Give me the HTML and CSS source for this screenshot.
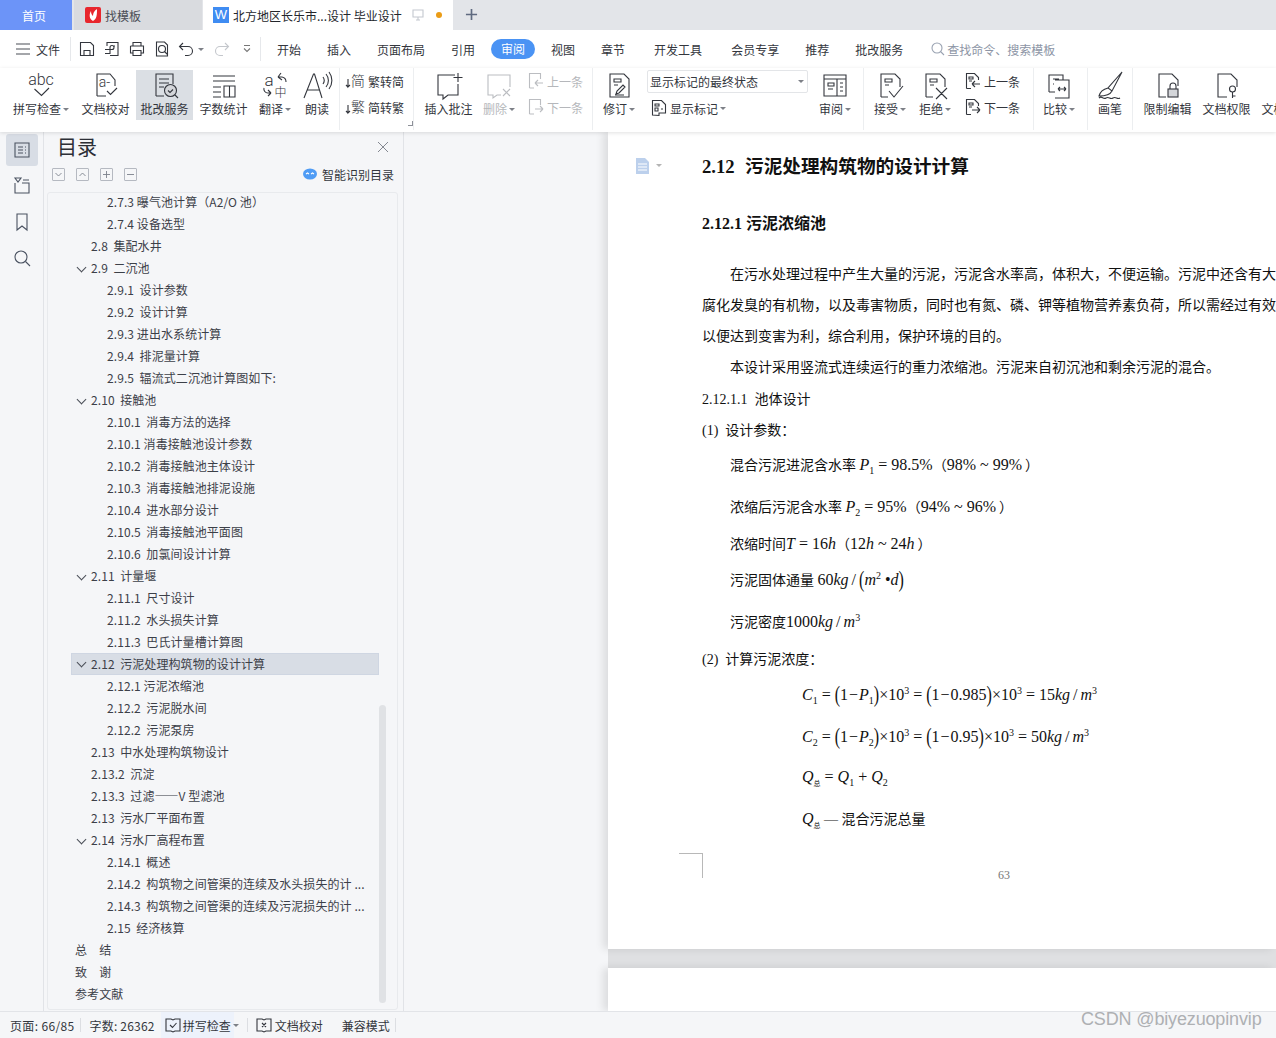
FILE: index.html
```html
<!DOCTYPE html>
<html lang="zh">
<head>
<meta charset="utf-8">
<title>WPS</title>
<link rel="stylesheet" href="styles.css">
</head>
<body>
<div class="app">
  <div class="tabs">
    <div class="tab tab-home">首页</div>
    <div class="tab tab-tpl">
      <svg class="tab-ico" viewBox="0 0 16 16"><rect width="16" height="16" rx="2" fill="#e8262d"/><path d="M8 14C4 12 4 7 6 4c0 3 1 4 2 5 0-3 1-5 4-7 0 5 0 10-4 12z" fill="#fff"/></svg>
      找模板
    </div>
    <div class="tab tab-doc">
      <span class="w-ico">W</span>
      <span class="tab-title">北方地区长乐市...设计 毕业设计</span>
      <svg class="tab-mon" viewBox="0 0 14 14"><path d="M2 2h10v7H2zM7 9v3M5 12h4"/></svg>
      <span class="dot"></span>
    </div>
    <svg class="plus" viewBox="0 0 14 14"><path d="M7 1v12M1 7h12"/></svg>
  </div>

  <div class="menu">
    <svg class="ham" viewBox="0 0 14 12"><path d="M0 1h14M0 6h14M0 11h14"/></svg>
    <span class="file">文件</span>
    <span class="msep"></span>
    <div class="quick">
      <svg class="q" viewBox="0 0 16 16"><path d="M1.500 1.500h10l3 3v10h-13zM5 14.500v-5h6v5"/></svg>
      <svg class="q" viewBox="0 0 16 16"><path d="M3 5V1.500h11V14.500H6M1 8.500h7a2 2 0 1 0-2-2v6H1M9 5h2"/></svg>
      <svg class="q" viewBox="0 0 16 16"><path d="M4 5V1.500h8V5M1.500 5h13v7H12M4 12H1.500V5M4 9.500h8v5H4z"/></svg>
      <svg class="q" viewBox="0 0 16 16"><path d="M2.500 15V1h8l3 3v11zM10.500 10.500l3 3"/><circle cx="8" cy="8" r="3.500"/></svg>
      <svg class="q q-undo" viewBox="0 0 16 16"><path d="M5 2L1.500 5.500 5 9M1.500 5.500H10a4.500 4.500 0 0 1 0 9H7"/></svg>
      <span class="caret caret-q"></span>
      <svg class="q q-redo" viewBox="0 0 16 16"><path d="M11 2l3.500 3.500L11 9M14.500 5.500H6a4.500 4.500 0 0 0 0 9h3"/></svg>
      <svg class="q q-more" viewBox="0 0 10 10"><path d="M2 1.500h6M2 4.500l3 3 3-3"/></svg>
    </div>
    <span class="msep msep-2"></span>
    <nav class="nav">
      <span>开始</span><span>插入</span><span>页面布局</span><span>引用</span>
      <span class="pill">审阅</span>
      <span>视图</span><span>章节</span><span class="pad3">开发工具</span><span class="pad3">会员专享</span><span>推荐</span><span>批改服务</span>
    </nav>
    <div class="search">
      <svg class="s-ico" viewBox="0 0 14 14"><circle cx="6" cy="6" r="5"/><path d="M9.500 9.500l3.500 3.500"/></svg>
      查找命令、搜索模板
    </div>
  </div>

  <div class="ribbon">
    <div class="rb w66">
      <svg class="ri" viewBox="0 0 32 32"><text x="16" y="15" class="it" font-size="16">abc</text><path d="M9.500 19l7 6.500 7.500-7.500"/></svg>
      <span class="lb">拼写检查<i class="caret"></i></span>
    </div>
    <div class="rb w57 ml3">
      <svg class="ri" viewBox="0 0 32 32"><path d="M7 26V4h13l5 6v6M7 26h9"/><text x="14.500" y="17" class="it" font-size="14">a-</text><path d="M17 21l3.500 3.500L27 18"/></svg>
      <span class="lb">文档校对</span>
    </div>
    <div class="rb w57 ml2 on">
      <svg class="ri" viewBox="0 0 32 32"><path d="M7 26V4h17v10M7 26h8M10 9h10M10 13h10M10 17h5"/><circle cx="21.500" cy="20.500" r="6" class="fillg"/><path d="M26 25l3 3M19 20.500l2 2 3-3"/></svg>
      <span class="lb">批改服务</span>
    </div>
    <div class="rb w57 ml2">
      <svg class="ri" viewBox="0 0 32 32"><path d="M5 6h22M5 11h22M5 17h8M5 22h8M5 27h8M16 16h11v11H16zM21.500 16v11"/></svg>
      <span class="lb">字数统计</span>
    </div>
    <div class="rb w38 ml4">
      <svg class="ri" viewBox="0 0 32 32"><text x="10" y="16" class="it" font-size="17">a</text><path d="M19 7l3-4M19 7l4 3M19 7h4a5 5 0 0 1 4 5M5 18a4 4 0 0 0 4 5h3M12 23l-3-3M12 23l-3 3"/><text x="21.500" y="27" class="it it-cjk" font-size="12">中</text></svg>
      <span class="lb">翻译<i class="caret"></i></span>
    </div>
    <div class="rb w38 ml4">
      <svg class="ri" viewBox="0 0 32 32"><path d="M3 28L12.500 4h1L21 28M6.500 20H18M22 7a6 6 0 0 1 0 7M25 4a10 10 0 0 1 0 13M28 2a14 14 0 0 1 0 17"/></svg>
      <span class="lb">朗读</span>
    </div>
    <span class="sep ml3"></span>
    <div class="stack w64 ml4">
      <div class="sr"><svg class="si si-wide" viewBox="0 0 22 22"><path d="M4 9v8l2-2M4 17l-2-2"/><text x="14" y="16" class="it it-cjk" font-size="14">简</text></svg>繁转简</div>
      <div class="sr"><svg class="si si-wide" viewBox="0 0 22 22"><path d="M4 9v8l2-2M4 17l-2-2"/><text x="14" y="16" class="it it-cjk" font-size="14">繁</text></svg>简转繁</div>
      <i class="corner"></i>
    </div>
    <span class="sep ml5"></span>
    <div class="rb w57 ml6">
      <svg class="ri" viewBox="0 0 32 32"><path d="M22 5H5v20h5v4l5-4h10V14M25 3v9M20.500 7.500h9"/></svg>
      <span class="lb">插入批注</span>
    </div>
    <div class="rb w40 ml2 off">
      <svg class="ri" viewBox="0 0 32 32"><path d="M27 17V5H5v20h5v3l4-3h4M20 19l7 7M27 19l-7 7"/></svg>
      <span class="lb">删除<i class="caret"></i></span>
    </div>
    <div class="stack w56 ml8 off">
      <div class="sr"><svg class="si" viewBox="0 0 18 18"><path d="M2.500 16V1.500h11V7M2.500 16H7M16 11H8M8 11l3-3M8 11l3 3"/></svg>上一条</div>
      <div class="sr"><svg class="si" viewBox="0 0 18 18"><path d="M2.500 16V1.500h11V7M2.500 16H7M8 11h8M16 11l-3-3M16 11l-3 3"/></svg>下一条</div>
    </div>
    <span class="sep ml9"></span>
    <div class="rb w44 ml4">
      <svg class="ri" viewBox="0 0 32 32"><path d="M7 27V4h14l5 5v18zM11 9h7v3h-7zM11 15h4M13 24l1-3 6-6 2 2-6 6zM12 25h9"/></svg>
      <span class="lb">修订<i class="caret"></i></span>
    </div>
    <div class="combo-col ml6">
      <div class="combo">显示标记的最终状态<i class="caret"></i></div>
      <div class="mark"><svg class="si" viewBox="0 0 18 18"><path d="M2.500 16V1.500h9l4 4V14H9v2.500zM5 5h4v2H5zM5 9h3v3H5zM11 10h2"/></svg>显示标记<i class="caret"></i></div>
    </div>
    <div class="rb w44 ml5">
      <svg class="ri" viewBox="0 0 32 32"><path d="M5 5h22v21H5zM5 9h22M18 9v17M9 13h6v3H9zM9 19h5M21 13h3M21 17h3M21 21h3"/></svg>
      <span class="lb">审阅<i class="caret"></i></span>
    </div>
    <span class="sep ml6"></span>
    <div class="rb w44 ml4">
      <svg class="ri" viewBox="0 0 32 32"><path d="M7 27V4h14l5 5v8M7 27h7M11 9h7v3h-7zM11 15h4M15 21l5 6 9-11"/></svg>
      <span class="lb">接受<i class="caret"></i></span>
    </div>
    <div class="rb w44 ml1">
      <svg class="ri" viewBox="0 0 32 32"><path d="M7 27V4h14l5 5v8M7 27h7M11 9h7v3h-7zM11 15h4M17 18l11 11M28 18L17 29"/></svg>
      <span class="lb">拒绝<i class="caret"></i></span>
    </div>
    <div class="stack w56 ml7">
      <div class="sr"><svg class="si" viewBox="0 0 18 18"><path d="M2.500 16.500V1.500h8l4 4V8M2.500 16.500H7M5 5h4v2H5zM5 9h3M16 12H8M8 12l3-3M8 12l3 3"/></svg>上一条</div>
      <div class="sr"><svg class="si" viewBox="0 0 18 18"><path d="M2.500 16.500V1.500h8l4 4V8M2.500 16.500H7M5 5h4v2H5zM5 9h3M8 12h8M16 12l-3-3M16 12l-3 3"/></svg>下一条</div>
    </div>
    <span class="sep ml13"></span>
    <div class="rb w46 ml2">
      <svg class="ri" viewBox="0 0 32 32"><path d="M6 22V5h14v5M12 10h14v18H12M6 22h6M10 9h6M10 14h1M15 19h8M15 19l2-2M15 19l2 2M23 19l-2-2M23 19l-2 2"/></svg>
      <span class="lb">比较<i class="caret"></i></span>
    </div>
    <span class="sep ml5"></span>
    <div class="rb w40 ml2">
      <svg class="ri" viewBox="0 0 32 32"><path d="M28 2L14 18l4 3zM14 18c-4 1-8 4-9 8 5 0 11-1 13-5M5 28c3-3 4 2 7 0s4 2 7 0 4 2 7 0"/></svg>
      <span class="lb">画笔</span>
    </div>
    <span class="sep ml2"></span>
    <div class="rb w57 ml6">
      <svg class="ri" viewBox="0 0 32 32"><path d="M14 27H7V4h13l6 6v6"/><rect x="16" y="19" width="10" height="8" class="fillg"/><path d="M18 19v-3a3 3 0 0 1 6 0v3"/></svg>
      <span class="lb">限制编辑</span>
    </div>
    <div class="rb w57 ml2">
      <svg class="ri" viewBox="0 0 32 32"><path d="M16 27H7V4h13l6 6v7"/><circle cx="21.500" cy="19" r="3"/><path d="M21.500 22v6M21.500 26h3"/></svg>
      <span class="lb">文档权限</span>
    </div>
    <div class="rb w57 ml2">
      <svg class="ri" viewBox="0 0 32 32"><path d="M16 27H7V4h13l6 6"/></svg>
      <span class="lb">文档定稿</span>
    </div>
  </div>

  <div class="main">
    <aside class="rail">
      <div class="rail-btn active"><svg viewBox="0 0 20 20"><path d="M3 3h14v14H3zM6 7h5M13 7h1M6 10h5M13 10h1M6 13h5M13 13h1"/></svg></div>
      <div class="rail-btn"><svg viewBox="0 0 20 20"><path d="M3 2h6L6 6zM11 4h6M3 7v10h14V7h-7"/></svg></div>
      <div class="rail-btn"><svg viewBox="0 0 20 20"><path d="M5 2h10v16l-5-4-5 4z"/></svg></div>
      <div class="rail-btn"><svg viewBox="0 0 20 20"><circle cx="9" cy="9" r="6"/><path d="M13.500 13.500L18 18"/></svg></div>
    </aside>
    <section class="panel">
      <div class="p-head">
        <h1 class="p-title">目录</h1>
        <svg class="p-close" viewBox="0 0 10 10"><path d="M0 0l10 10M10 0L0 10"/></svg>
      </div>
      <div class="p-tools">
        <span class="tb"><svg viewBox="0 0 11 11"><path d="M2.500 4l3 3 3-3"/></svg></span>
        <span class="tb"><svg viewBox="0 0 11 11"><path d="M2.500 7l3-3 3 3"/></svg></span>
        <span class="tb"><svg viewBox="0 0 11 11"><path d="M2 5.500h7M5.500 2v7"/></svg></span>
        <span class="tb"><svg viewBox="0 0 11 11"><path d="M2 5.500h7"/></svg></span>
        <span class="smart"><svg class="smart-ico" viewBox="0 0 14 12"><ellipse cx="7" cy="6" rx="7" ry="5.500" fill="#4f9cf5"/><path d="M3 6l1.500-1L6 6M8 6l1.500-1L11 6" fill="none" stroke="#fff"/></svg>智能识别目录</span>
      </div>
      <div class="tree-box">
        <ul class="tree">
          <li class="l2">2.7.3 曝气池计算（A2/O 池）</li>
          <li class="l2">2.7.4 设备选型</li>
          <li class="l1">2.8  集配水井</li>
          <li class="l1 open">2.9  二沉池</li>
          <li class="l2">2.9.1  设计参数</li>
          <li class="l2">2.9.2  设计计算</li>
          <li class="l2">2.9.3 进出水系统计算</li>
          <li class="l2">2.9.4  排泥量计算</li>
          <li class="l2">2.9.5  辐流式二沉池计算图如下:</li>
          <li class="l1 open">2.10  接触池</li>
          <li class="l2">2.10.1  消毒方法的选择</li>
          <li class="l2">2.10.1 消毒接触池设计参数</li>
          <li class="l2">2.10.2  消毒接触池主体设计</li>
          <li class="l2">2.10.3  消毒接触池排泥设施</li>
          <li class="l2">2.10.4  进水部分设计</li>
          <li class="l2">2.10.5  消毒接触池平面图</li>
          <li class="l2">2.10.6  加氯间设计计算</li>
          <li class="l1 open">2.11  计量堰</li>
          <li class="l2">2.11.1  尺寸设计</li>
          <li class="l2">2.11.2  水头损失计算</li>
          <li class="l2">2.11.3  巴氏计量槽计算图</li>
          <li class="l1 open sel">2.12  污泥处理构筑物的设计计算</li>
          <li class="l2">2.12.1 污泥浓缩池</li>
          <li class="l2">2.12.2  污泥脱水间</li>
          <li class="l2">2.12.2  污泥泵房</li>
          <li class="l1">2.13  中水处理构筑物设计</li>
          <li class="l1">2.13.2  沉淀</li>
          <li class="l1">2.13.3  过滤——V 型滤池</li>
          <li class="l1">2.13  污水厂平面布置</li>
          <li class="l1 open">2.14  污水厂高程布置</li>
          <li class="l2">2.14.1  概述</li>
          <li class="l2">2.14.2  构筑物之间管渠的连续及水头损失的计 ...</li>
          <li class="l2">2.14.3  构筑物之间管渠的连续及污泥损失的计 ...</li>
          <li class="l2">2.15  经济核算</li>
          <li class="l0">总　结</li>
          <li class="l0">致　谢</li>
          <li class="l0">参考文献</li>
        </ul>
        <span class="scroll"></span>
      </div>
    </section>
    <section class="doc">
      <article class="page">
        <svg class="page-ico" viewBox="0 0 26 16"><path d="M0 0h9l4 4v12H0z" fill="#bcd0ec"/><path d="M2 6h9M2 9h9M2 12h9" stroke="#fff"/><path d="M20 6h6l-3 3z" fill="#b4b4b4"/></svg>
        <h2 class="line h-a">2.12&nbsp; 污泥处理构筑物的设计计算</h2>
        <h3 class="line h-b g26">2.12.1 污泥浓缩池</h3>
        <p class="line ind g20">在污水处理过程中产生大量的污泥，污泥含水率高，体积大，不便运输。污泥中还含有大</p>
        <p class="line">腐化发臭的有机物，以及毒害物质，同时也有氮、磷、钾等植物营养素负荷，所以需经过有效</p>
        <p class="line">以便达到变害为利，综合利用，保护环境的目的。</p>
        <p class="line ind">本设计采用竖流式连续运行的重力浓缩池。污泥来自初沉池和剩余污泥的混合。</p>
        <p class="line g1">2.12.1.1&nbsp; 池体设计</p>
        <p class="line">(1)&nbsp; 设计参数：</p>
        <p class="line ind g3">混合污泥进泥含水率 <span class="f"><i>P</i><sub>1</sub> = 98.5%</span>（<span class="f">98% ~ 99%</span><span class="pc">）</span></p>
        <p class="line ind g11">浓缩后污泥含水率 <span class="f"><i>P</i><sub>2</sub> = 95%</span>（<span class="f">94% ~ 96%</span><span class="pc">）</span></p>
        <p class="line ind g6">浓缩时间<span class="f"><i>T</i> = 16<i>h</i></span>（<span class="f">12<i>h</i> ~ 24<i>h</i></span><span class="pc">）</span></p>
        <p class="line ind g5">污泥固体通量 <span class="f">60<i>kg</i><span class="sl">/</span><span class="bp">(</span><i>m</i><sup>2</sup> •<i>d</i><span class="bp">)</span></span></p>
        <p class="line ind g11">污泥密度<span class="f">1000<i>kg</i><span class="sl">/</span><i>m</i><sup>3</sup></span></p>
        <p class="line g7">(2)&nbsp; 计算污泥浓度：</p>
        <p class="line eq g4"><span class="f"><i>C</i><sub>1</sub> = <span class="bp">(</span>1<span class="mn">−</span><i>P</i><sub>1</sub><span class="bp">)</span>×10<sup>3</sup> = <span class="bp">(</span>1<span class="mn">−</span>0.985<span class="bp">)</span>×10<sup>3</sup> = 15<i>kg</i><span class="sl">/</span><i>m</i><sup>3</sup></span></p>
        <p class="line eq g11"><span class="f"><i>C</i><sub>2</sub> = <span class="bp">(</span>1<span class="mn">−</span><i>P</i><sub>2</sub><span class="bp">)</span>×10<sup>3</sup> = <span class="bp">(</span>1<span class="mn">−</span>0.95<span class="bp">)</span>×10<sup>3</sup> = 50<i>kg</i><span class="sl">/</span><i>m</i><sup>3</sup></span></p>
        <p class="line eq g9"><span class="f"><i>Q</i><sub class="cn">总</sub> = <i>Q</i><sub>1</sub> + <i>Q</i><sub>2</sub></span></p>
        <p class="line eq g11"><span class="f"><i>Q</i><sub class="cn">总</sub></span> — 混合污泥总量</p>
        <div class="foot">
          <span class="crop"></span>
          <span class="pno">63</span>
        </div>
      </article>
      <div class="page-gap"></div>
      <div class="page-next"></div>
    </section>
  </div>

  <footer class="status">
    <span class="st st-a">页面: 66/85</span><span class="ss"></span>
    <span class="st st-b">字数: 26362</span>
    <span class="st st-spell"><svg class="st-ico" viewBox="0 0 16 16"><path d="M1 2h5l2 1 2-1h5v12H10l-2 1-2-1H1zM5 8l2.500 2.500L11.500 6"/></svg>拼写检查<i class="caret"></i></span><span class="ss ss-2"></span>
    <span class="st st-c"><svg class="st-ico" viewBox="0 0 16 16"><path d="M1 2h5l2 1 2-1h5v12H10l-2 1-2-1H1zM6 6l4 4M10 6l-4 4"/></svg>文档校对</span>
    <span class="st st-d">兼容模式</span><span class="ss"></span>
    <span class="mark-csdn">CSDN @biyezuopinvip</span>
  </footer>
</div>
</body>
</html>
```
FILE: styles.css
```css
* { box-sizing: border-box; }
html, body { margin: 0; padding: 0; }
body { font-family: "Noto Sans CJK SC", "Noto Sans", sans-serif; font-size: 12px; color: #33363d; background: #f5f6f8; overflow: hidden; }
svg { fill: none; stroke: #33363d; stroke-width: 1.1; display: block; flex: none; }
.app { width: 1276px; height: 1038px; display: flex; flex-direction: column; overflow: hidden; }

/* tabs */
.tabs { height: 30px; flex: none; display: flex; align-items: stretch; background: #e3e5e9; }
.tab { display: flex; align-items: center; font-size: 12px; }
.tab-home { width: 72px; justify-content: center; padding-right: 4px; background: #6c94f8; color: #fff; }
.tab-tpl { width: 128px; margin-left: 2px; padding-left: 11px; background: #d9dbdf; color: #4a4d55; }
.tab-ico { width: 16px; height: 16px; margin-right: 4px; stroke: none; }
.tab-doc { width: 250px; margin-left: 1px; padding-left: 10px; background: #fff; color: #23262c; }
.w-ico { width: 16px; height: 16px; margin-right: 4px; background: #3f8cf2; color: #fff; font: 13px/16px "Liberation Sans", sans-serif; text-align: center; }
.tab-title { width: 172px; white-space: nowrap; }
.tab-mon { width: 14px; height: 14px; margin-left: 6px; stroke: #c4c8cf; }
.dot { width: 6px; height: 6px; margin-left: 11px; border-radius: 50%; background: #eb9c16; }
.plus { width: 13px; height: 13px; margin: 8px 0 0 12px; stroke: #5f6a80; stroke-width: 1.8; }

/* menu */
.menu { height: 38px; flex: none; display: flex; align-items: center; background: #fff; padding: 0 0 0 16px; }
.ham { width: 14px; height: 12px; stroke: #4a4e57; }
.file { margin-left: 6px; width: 24px; }
.msep { width: 1px; height: 24px; margin-left: 10px; background: #e6e8eb; }
.msep-2 { margin-left: 8px; }
.quick { display: flex; align-items: center; padding-left: 8px; }
.q { width: 16px; height: 16px; margin-right: 9px; }
.q-undo { margin-right: 2px; margin-left: -1px; }
.caret-q { margin-right: 10px; }
.q-redo { stroke: #c4c7cc; margin-right: 12px; }
.q-more { width: 10px; height: 10px; stroke: #777; margin: 0; }
.nav { display: flex; align-items: center; gap: 26px; margin-left: 16px; }
.pill { height: 20px; margin: 0 -10px; padding: 0 10px; line-height: 20px; border-radius: 10px; background: #4a93f4; color: #fff; }
.pad3 { margin-left: 3px; }
.search { display: flex; align-items: center; margin-left: 28px; color: #8d95a5; }
.s-ico { width: 14px; height: 14px; margin-right: 2px; stroke: #9aa3b2; }

/* ribbon */
.ribbon { height: 64px; flex: none; display: flex; align-items: flex-start; padding: 2px 0 0 8px; background: #fff; position: relative; z-index: 2; box-shadow: 0 1px 4px rgba(0,0,0,.12); overflow: hidden; }
.rb { flex: none; height: 50px; display: flex; flex-direction: column; align-items: center; }
.rb.on { background: #dbdfe4; }
.ri { width: 32px; height: 32px; margin-bottom: -1px; }
.it { font-family: Roboto, "Liberation Sans", sans-serif; font-weight: 300; fill: #33363d; stroke: none; text-anchor: middle; }
.it-cjk { font-family: "Noto Sans CJK SC", sans-serif; }
.fillg { fill: #d4d6da; }
.lb { height: 16px; line-height: 16px; white-space: nowrap; display: flex; align-items: center; }
.caret { display: inline-block; flex: none; width: 0; height: 0; margin-left: 2px; border: 3px solid transparent; border-top: 3px solid #7d8087; border-bottom: 0; }
.off { color: #b5b7bb; }
.off svg { stroke: #bbbdc1; }
.w38 { width: 38px; } .w40 { width: 40px; } .w44 { width: 44px; } .w46 { width: 46px; }
.w56 { width: 56px; } .w57 { width: 57px; } .w64 { width: 64px; } .w66 { width: 66px; }
.ml1 { margin-left: 1px; } .ml2 { margin-left: 2px; } .ml3 { margin-left: 3px; } .ml4 { margin-left: 4px; }
.ml5 { margin-left: 5px; } .ml6 { margin-left: 6px; } .ml7 { margin-left: 7px; } .ml8 { margin-left: 8px; }
.ml9 { margin-left: 9px; } .ml13 { margin-left: 13px; }
.sep { flex: none; width: 1px; height: 62px; margin-top: -2px; background: #eceef0; }
.stack { flex: none; position: relative; height: 50px; display: flex; flex-direction: column; gap: 10px; padding-top: 3px; }
.sr { height: 16px; display: flex; align-items: center; white-space: nowrap; }
.si { width: 18px; height: 18px; margin-right: 2px; }
.si-wide { width: 22px; height: 22px; margin-right: 2px; }
.corner { position: absolute; right: -5px; bottom: -6px; width: 5px; height: 5px; border-right: 1px solid #8d9098; border-bottom: 1px solid #8d9098; }
.combo-col { flex: none; width: 161px; display: flex; flex-direction: column; }
.combo { height: 23px; padding-left: 2px; display: flex; align-items: center; justify-content: space-between; padding-right: 3px; border: 1px solid #e3e5e8; border-radius: 2px; white-space: nowrap; font-size: 12px; }
.mark { margin: 6px 0 0 3px; height: 18px; display: flex; align-items: center; }

/* main */
.main { flex: 1; min-height: 0; display: flex; }
.rail { width: 44px; flex: none; border-right: 1px solid #e1e3e7; padding: 2px 6px 0; display: flex; flex-direction: column; gap: 4px; }
.rail-btn { width: 32px; height: 32px; display: flex; align-items: center; justify-content: center; border-radius: 3px; }
.rail-btn svg { width: 20px; height: 20px; stroke: #4a5261; }
.rail-btn.active { background: #d8dde5; }
.panel { width: 360px; flex: none; border-right: 1px solid #e1e3e7; padding-left: 3px; display: flex; flex-direction: column; }
.p-head { height: 30px; flex: none; display: flex; align-items: center; justify-content: space-between; padding: 0 15px 0 10px; }
.p-title { margin: 0; font-size: 20px; font-weight: 400; line-height: 30px; color: #2c2f36; }
.p-close { width: 10px; height: 10px; stroke: #777c85; stroke-width: .9; }
.p-tools { height: 18px; margin-top: 3px; flex: none; display: flex; align-items: center; gap: 11px; padding: 0 9px 0 5px; }
.tb { width: 13px; height: 13px; border: 1px solid #b5b9c1; border-radius: 1px; }
.tb svg { width: 11px; height: 11px; stroke: #7c818b; stroke-width: .9; }
.smart { margin-left: auto; display: flex; align-items: center; }
.smart-ico { width: 14px; height: 12px; margin-right: 5px; stroke: none; }
.tree-box { flex: 1; min-height: 0; margin: 9px 5px 1px 0; position: relative; border: 1px solid #e8eaed; border-radius: 3px; overflow: hidden; }
.tree { list-style: none; margin: -2px 0 0; padding: 0; }
.tree li { height: 22px; line-height: 22px; white-space: pre; color: #3c4048; letter-spacing: .08px; position: relative; overflow: hidden; width: 330px; }
.l0 { padding-left: 27px; }
.l1 { padding-left: 43px; }
.l2 { padding-left: 59px; }
.tree .open::before { content: ""; position: absolute; left: 30px; top: 7px; width: 6px; height: 6px; border-right: 1px solid #4a4e57; border-bottom: 1px solid #4a4e57; transform: rotate(45deg); }
.tree .sel { margin-left: 23px; padding-left: 19px; width: 308px; background: #d8dde5; border: 1px solid #cfd6e2; line-height: 20px; }
.tree .sel::before { left: 6px; top: 5px; }
.scroll { position: absolute; left: 331px; top: 512px; width: 7px; height: 298px; border-radius: 4px; background: #e0e2e5; }

/* document */
.doc { flex: 1; min-width: 0; padding-left: 204px; display: flex; flex-direction: column; overflow: hidden; }
.page { height: 817px; flex: none; position: relative; padding: 19px 0 0 94px; background: #fff; box-shadow: -5px 0 8px rgba(0,0,0,.1); font-family: "Liberation Serif", "Noto Sans CJK SC", serif; font-size: 14px; color: #111; white-space: nowrap; }
.page-ico { position: absolute; left: 28px; top: 26px; width: 26px; height: 16px; stroke: none; }
.line { margin: 0; height: 31px; line-height: 31px; overflow: visible; }
.h-a { font-size: 18.67px; font-weight: 700; word-spacing: .5px; }
.h-b { font-size: 16px; font-weight: 700; }
.ind { padding-left: 28px; }
.eq { padding-left: 100px; }
.g1 { margin-top: 1px; } .g3 { margin-top: 3px; } .g4 { margin-top: 4px; } .g5 { margin-top: 5px; } .g6 { margin-top: 6px; } .g7 { margin-top: 7px; }
.g9 { margin-top: 9px; } .g11 { margin-top: 11px; } .g20 { margin-top: 20px; } .g26 { margin-top: 26px; }
.f { font-size: 16px; font-family: "Liberation Serif", "Noto Sans CJK SC", serif; }
.f sub, .f sup { font-size: 10px; line-height: 0; }
.f .cn { font-size: 7px; }
.mn { margin: 0 1px; }
.pc { margin-left: 3px; }
.sl { margin: 0 3px; }
.bp { display: inline-block; transform: scale(1, 1.45); transform-origin: 50% 65%; line-height: 0; }
.foot { display: flex; align-items: flex-start; margin-top: 19px; margin-left: -23px; height: 40px; }
.crop { width: 24px; height: 25px; border-top: 1px solid #b8b8b8; border-right: 1px solid #b8b8b8; }
.pno { margin: 15px 0 0 295px; font-size: 12px; color: #777; }
.page-gap { height: 19px; flex: none; background: #dfe0e2; }
.page-next { flex: 1; background: #fff; box-shadow: -5px 0 8px rgba(0,0,0,.1); }

/* status */
.status { height: 27px; flex: none; position: relative; display: flex; align-items: center; padding-left: 10px; border-top: 1px solid #e2e4e8; background: #f5f6f8; color: #33363d; white-space: nowrap; }
.st { display: flex; align-items: center; height: 100%; }
.st-a { letter-spacing: .35px; }
.st-b { letter-spacing: .2px; }
.ss { width: 1px; height: 14px; margin-left: 5px; background: #dcdee2; }
.st-b { margin-left: 9px; }
.st-spell { margin-left: 6px; width: 73px; padding-left: 4px; height: 26px; background: #edf2fb; }
.st-ico { width: 16px; height: 16px; margin-right: 2px; }
.ss-2 { margin-left: 13px; }
.st-c { margin-left: 8px; }
.st-c .st-ico { margin-right: 3px; }
.st-d { margin-left: 19px; }
.mark-csdn { position: absolute; left: 1081px; top: -5px; font: 18px/24px "Liberation Sans", sans-serif; letter-spacing: -.15px; color: #aeb0b3; }
```
